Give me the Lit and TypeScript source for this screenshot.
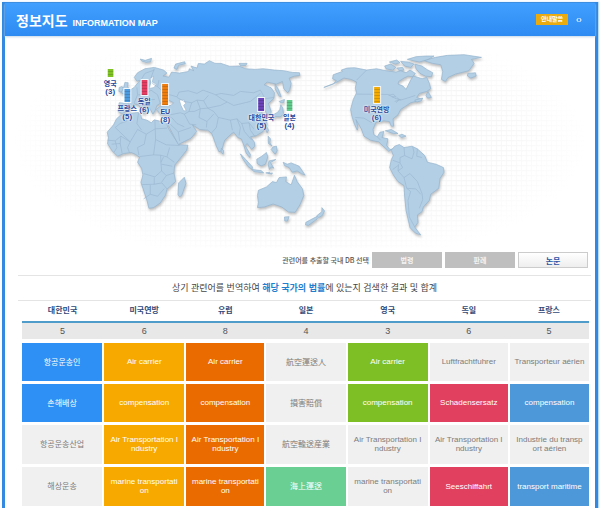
import { LitElement, html, svg, css } from "lit";
import { customElement } from "lit/decorators.js";
import { classMap } from "lit/directives/class-map.js";

interface Marker { name: string; count: number; x: number; y: number; bar: number; color: string }

// Marker centres are given on the 589 x 212 map canvas.
const MAP_W = 589;
const MAP_H = 212;
const markers: Marker[] = [
  { name: "영국", count: 3, x: 105, y: 33, bar: 8, color: "#80c225" },
  { name: "프랑스", count: 5, x: 122, y: 53, bar: 13, color: "#4a9be0" },
  { name: "독일", count: 6, x: 139, y: 44, bar: 15, color: "#e43f63" },
  { name: "EU", count: 8, x: 160, y: 48, bar: 21, color: "#f07d0c" },
  { name: "대한민국", count: 5, x: 256, y: 62, bar: 13, color: "#6a41b8" },
  { name: "일본", count: 4, x: 284, y: 64, bar: 11, color: "#5fcb8b" },
  { name: "미국연방", count: 6, x: 371, y: 51, bar: 16, color: "#f5ab00" },
];

const africa = "M300 226L318 220L355 217L362 226L364 236L380 240L393 248L402 239L438 248L444 264L460 290L477 314L503 315L499 330L480 354L463 375L461 398L466 424L450 438L440 447L436 464L420 488L400 502L386 504L380 480L368 444L362 426L368 404L364 384L352 366L358 351L345 342L333 337L310 340L292 348L276 332L262 310L265 292L261 276L280 254L289 236Z";
const eurasia = "M294 215L297 188L325 190L329 174L314 158L328 151L342 142L352 129L362 120L350 123L342 112L352 98L374 86L402 82L430 90L440 99L428 108L446 111L454 96L478 99L505 94L507 86L520 92L512 78L530 84L534 70L552 72L567 62L584 70L602 70L628 79L655 78L676 86L704 88L728 86L762 90L790 92L815 97L837 98L838 106L822 108L806 114L812 130L808 148L802 158L790 146L786 124L768 132L740 126L731 134L752 143L762 158L760 175L744 190L752 214L750 224L740 223L730 204L724 218L734 232L740 252L728 274L708 286L690 290L702 306L703 318L694 328L680 310L674 316L690 343L688 352L677 338L670 315L663 296L652 292L640 276L632 282L613 300L604 330L596 335L588 318L578 290L574 280L562 270L538 268L526 260L516 254L529 274L512 294L474 313L460 286L442 252L450 231L444 225L422 224L408 208L420 198L452 196L460 188L442 178L426 186L410 196L405 210L398 222L388 204L370 190L380 214L370 221L355 194L342 191L325 212L306 220Z";
const oldWorldIslands = [
  "M303 158L301 146L311 141L314 127L324 128L322 140L331 152L326 158L308 161Z",
  "M296 154L297 142L306 139L309 146L303 156Z",
  "M360 57L375 61L394 55L391 65L378 67L364 63Z",
  "M461 84L466 72L493 65L495 71L475 76L470 88Z",
  "M473 463L475 428L492 411L497 429L485 464L478 470Z",
  "M603 324L610 332L608 342L602 336Z",
  "M656 70L680 70L676 76L660 77Z",
  "M764 132L774 148L782 170L776 168L764 146Z",
  "M776 184L792 178L790 187L780 188Z",
  "M781 194L787 204L789 222L779 230L764 229L758 236L755 226L772 216L778 208Z",
  "M741 262L744 270L740 278L736 268Z",
  "M743 288L750 296L748 308L755 318L744 310Z",
  "M758 320L768 318L770 332L764 342L752 328Z",
  "M660 341L676 358L696 380L695 388L682 378L666 354Z",
  "M695 388L722 391L730 398L700 394Z",
  "M709 357L724 348L738 337L742 350L735 372L722 377L710 370Z",
  "M746 362L766 358L750 367L760 384L752 380L747 388L743 372Z",
  "M736 398L748 396L745 400L756 398L754 402Z",
  "M788 366L800 372L812 368L836 378L854 405L842 400L830 392L815 396L806 382L792 376Z",
  "M711 466L714 450L738 440L756 424L768 427L776 412L798 410L796 424L812 434L822 405L830 424L846 446L850 466L838 494L824 516L804 515L784 500L758 491L732 500L711 502L714 486Z",
  "M792 530L806 529L801 542L793 542Z",
  "M856 546L890 528L890 536L864 555L855 554Z",
  "M889 526L904 514L904 502L912 512L905 526L894 532Z",
];
const oldBorders = "M262 300L285 302L302 288L330 305L352 268L378 282L405 266L440 264M322 222L318 244L300 250L285 262L330 305M355 218L350 250L364 270M404 240L406 298L438 314L478 316M378 282L372 312L352 322L356 345M330 305L322 322L328 338M302 288L300 310L274 312M285 302L290 322L282 336M300 310L306 340M358 349L400 344L421 345L440 350L448 322M421 345L422 366L424 392L404 410L370 400M424 372L456 378M424 392L438 406L462 398M402 412L402 432L366 433M402 432L425 428L440 446M390 434L390 462L370 476M390 462L412 468L432 445M438 406L424 426M406 298L400 344M440 350L462 366M422 366L430 350";
const asiaBorders = "M342 188L352 164L350 142M354 164L376 164L392 150L412 164L420 190M362 120L374 100L402 90M388 144L392 114L402 86M376 180L404 178M412 140L396 130M416 120L412 140L434 160L470 170L476 156L504 152L530 160L548 150L586 164L602 160L640 166L660 154L700 158L720 150L734 176L760 172M586 164L606 178L640 196L690 184L720 160M470 172L492 184L514 188L530 180L550 182L564 166M514 188L506 214L492 222L508 252L528 254M450 224L480 218L492 222M530 180L540 206L522 214L506 214M550 182L562 204L540 206M562 204L580 214L594 232L630 240L650 236L664 250L686 248L700 266M540 206L536 232L560 244L558 262M560 244L580 222M594 232L588 262L574 278M630 240L636 270M650 236L660 262L656 286M664 250L672 274L694 300M686 248L690 270L704 290M454 232L470 250L492 260M448 250L474 275L512 262M474 275L478 302M562 204L600 196L620 186";

const northAmerica = "M10 142L38 131L48 122L36 116L38 104L52 99L66 94L62 90L80 84L102 83L138 90L168 86L196 92L226 96L240 92L256 98L268 90L284 100L276 110L262 108L250 114L234 124L232 132L247 138L256 148L262 136L270 120L278 108L292 112L304 116L318 112L326 130L330 146L318 154L296 160L288 172L304 178L286 184L270 188L252 200L240 208L232 224L217 236L219 258L212 258L206 244L190 242L166 246L157 268L160 284L170 290L178 276L190 274L184 292L202 296L198 316L208 328L218 326L204 333L190 320L174 305L150 300L130 288L122 266L106 238L112 262L110 270L100 248L94 228L90 208L98 178L108 158L104 144L108 126L92 118L70 114L56 122L38 132Z";
const southAmerica = "M212 330L222 318L236 313L250 322L274 318L290 326L312 346L320 366L346 372L368 382L370 396L358 414L354 444L330 462L326 480L308 500L304 514L290 524L292 546L282 560L300 584L284 578L268 562L262 536L256 510L252 470L250 436L232 424L218 404L207 382L212 358L218 346Z";
const newWorldIslands = [
  "M310 62L344 52L380 46L430 44L482 52L452 58L460 70L444 92L404 102L382 112L374 124L362 118L366 94L360 74L336 70Z",
  "M441 100L464 98L466 108L450 114L440 108Z",
  "M192 78L210 72L226 82L216 90L196 86Z",
  "M206 66L228 60L238 68L224 72Z",
  "M240 64L262 66L280 72L270 82L252 78Z",
  "M260 58L286 50L316 48L340 48L322 58L296 66Z",
  "M282 72L304 78L318 88L336 98L332 110L314 108L298 100L286 86Z",
  "M228 84L246 82L250 90L236 92Z",
  "M316 166L322 154L332 172L320 174Z",
  "M194 272L212 268L232 280L218 280Z",
  "M234 286L244 282L256 288L242 292Z",
  "M282 180L306 174L302 182L288 186Z",
];
const newBorders = "M138 90L108 120M108 162L202 163L222 174L240 180L260 174L284 166M104 232L130 234L154 248M170 290L180 300M216 360L238 368L246 382L232 392L250 412L268 400L290 424L304 460L306 478L296 504M250 322L252 346L238 352L238 368M252 346L274 356L280 336L276 320M290 326L288 348L304 352M232 392L234 372M250 412L258 444L270 454L262 480L266 530L282 560M258 444L286 446L300 462M216 388L232 376M204 166L218 162L226 170L214 170M228 172L236 178L226 188M222 184L242 178";

@customElement("info-world-map")
class InfoWorldMap extends LitElement {
  static styles = css`
    :host { display: block; position: relative; }
    .canvas { display: block; width: 100%; height: auto; }
    .land { fill: #b3cfe6; stroke: #93b2cb; stroke-width: 2; stroke-linejoin: round; }
    .border { fill: none; stroke: #9ab7d0; stroke-width: 2; stroke-linejoin: round; }
    .sea { fill: #fff; stroke: #9bb8d0; stroke-width: 2; }
    .line { fill: none; stroke: #f6f6f6; stroke-width: 3; }
    .marker {
      position: absolute;
      display: flex;
      flex-direction: column;
      align-items: center;
      transform: translateX(-50%);
      color: #26489b;
      font: bold 7px/9px "Liberation Sans", "Noto Sans CJK KR", sans-serif;
      white-space: nowrap;
      text-shadow: 0 0 2px #fff, 0 0 2px #fff;
    }
    .bar {
      width: 6px;
      margin-bottom: 2px;
      outline: 1px solid rgba(255, 255, 255, 0.8);
      background-image: repeating-linear-gradient(transparent 0 2px, rgba(0, 0, 0, 0.14) 2px 3px);
    }
    .count { font-size: 8px; line-height: 8px; }
  `;

  render() {
    return html`
      <svg class="canvas" viewBox="15 108 1767 636" role="img" aria-label="World map">
        <defs>
          <pattern id="grid" width="15" height="15" patternUnits="userSpaceOnUse">
            <path class="line" d="M0 1.5H15M1.5 0V15" />
          </pattern>
          <radialGradient id="fade">
            <stop offset="0.7" stop-color="#fff" />
            <stop offset="1" stop-color="#000" />
          </radialGradient>
          <mask id="vignette"><rect x="40" y="60" width="1720" height="740" fill="url(#fade)" /></mask>
          <filter id="shade" x="-5%" y="-5%" width="110%" height="115%">
            <feDropShadow dx="2" dy="6" stdDeviation="3" flood-color="#777" flood-opacity="0.45" />
          </filter>
        </defs>
        <rect x="15" y="108" width="1767" height="636" fill="url(#grid)" mask="url(#vignette)" />
        <g transform="translate(60 120)">
          <g filter="url(#shade)">
            <path class="land" d=${africa} />
            <path class="land" d=${eurasia} />
            ${oldWorldIslands.map((d) => svg`<path class="land" d=${d} />`)}
          </g>
          <path class="sea" d="M477 180L490 178L496 190L490 196L498 212L490 212L482 196Z" />
          <path class="sea" d="M384 146L392 128L388 116L400 108L396 126L408 132L402 142Z" />
          <path class="border" d=${oldBorders} />
          <path class="border" d=${asiaBorders} />
        </g>
        <g transform="translate(960 120)">
          <g filter="url(#shade)">
            <path class="land" d=${northAmerica} />
            <path class="land" d=${southAmerica} />
            ${newWorldIslands.map((d) => svg`<path class="land" d=${d} />`)}
          </g>
          <path class="border" d=${newBorders} />
        </g>
      </svg>
      ${markers.map((m) => html`
        <div class="marker" style="left:${(m.x / MAP_W) * 100}%;top:${(m.y / MAP_H) * 100}%">
          <span class="bar" style="height:${m.bar}px;background-color:${m.color}"></span>
          <span>${m.name}</span>
          <span class="count">(${m.count})</span>
        </div>`)}
    `;
  }
}

const countries = [
  { name: "대한민국", total: 5, tone: "blue" },
  { name: "미국연방", total: 6, tone: "amber" },
  { name: "유럽", total: 8, tone: "orange" },
  { name: "일본", total: 4, tone: "mint" },
  { name: "영국", total: 3, tone: "green" },
  { name: "독일", total: 6, tone: "red" },
  { name: "프랑스", total: 5, tone: "sky" },
];

// Long terms carry a zero-width space where they may wrap.
const industry = "Air Transportation I\u200bndustry";
const marine = "marine transportati\u200bon";

// Each term is followed by whether the country's law contains it.
const rows: [string, boolean][][] = [
  [["항공운송인", true], ["Air carrier", true], ["Air carrier", true], ["航空運送人", false], ["Air carrier", true], ["Luftfrachtfuhrer", false], ["Transporteur aérien", false]],
  [["손해배상", true], ["compensation", true], ["compensation", true], ["損害賠償", false], ["compensation", true], ["Schadensersatz", true], ["compensation", true]],
  [["항공운송산업", false], [industry, true], [industry, true], ["航空輸送産業", false], [industry, false], [industry, false], ["Industrie du transp\u200bort aérien", false]],
  [["해상운송", false], [marine, true], [marine, true], ["海上運送", true], [marine, false], ["Seeschiffahrt", true], ["transport maritime", true]],
];

@customElement("app-root")
class AppRoot extends LitElement {
  static styles = css`
    :host {
      display: block;
      box-sizing: border-box;
      padding: 2px 2px 0;
      background: #fafcff;
      font-family: "Liberation Sans", "Noto Sans CJK KR", sans-serif;
      color: #555;
    }
    .frame {
      border: solid #3388e0;
      border-width: 1px 3px 0;
      background: #fff;
      box-shadow: 1px 0 1px #b9dcfb;
    }
    header {
      display: flex;
      align-items: center;
      height: 33px;
      padding: 0 13px 0 11px;
      background: linear-gradient(#419fff, #2d8bf2);
      box-shadow: 0 1px 2px #c5d6e6;
      color: #fff;
    }
    h1 {
      display: flex;
      align-items: baseline;
      gap: 5px;
      margin: 0 auto 0 0;
      font: bold 14px/20px "Noto Sans CJK KR", sans-serif;
    }
    .english { font: bold 9px/12px "Liberation Sans", sans-serif; }
    button { margin: 0; padding: 0; border: 0; font-family: inherit; font-weight: bold; }
    .notice {
      width: 32px;
      height: 11px;
      margin-right: 8px;
      background: #e9ab10;
      color: #fff;
      font-size: 6px;
      line-height: 11px;
    }
    .toggle { display: flex; background: none; }
    .controls {
      display: flex;
      align-items: center;
      justify-content: flex-end;
      gap: 3px;
      height: 24px;
      padding: 0 3px 3px 0;
      margin: 0 4px 0 13px;
      border-bottom: 1px solid #e4e4e4;
      font: 500 7px/12px "Noto Sans CJK KR", sans-serif;
    }
    .db {
      width: 70px;
      height: 16px;
      background: #bfbfbf;
      color: #f4f4f4;
      font-size: 7px;
    }
    .db.active {
      border: 1px solid #ccc;
      background: linear-gradient(#fff, #eee);
      color: #2a55a5;
      font-size: 8px;
    }
    .summary {
      margin: 0 4px 0 13px;
      border-bottom: 1px solid #e4e4e4;
      color: #444;
      font-size: 9px;
      line-height: 24px;
      text-align: center;
    }
    .summary strong { color: #1f80cf; }
    .results { padding: 0 6px 2px 17px; }
    table { width: 100%; table-layout: fixed; border-spacing: 0; }
    .narrow { width: 80px; }
    .medium { width: 81px; }
    .wide { width: 82px; }
    th {
      height: 20px;
      padding: 0;
      border-bottom: 2px solid #4f9bca;
      color: #2f4a78;
      font-size: 8px;
      line-height: 12px;
    }
    td { padding: 0; text-align: center; }
    .total {
      height: 16px;
      border-bottom: 4px solid #fff;
      background: #e8e8e8;
      font-size: 9px;
      line-height: 12px;
    }
    .term {
      height: 38px;
      border: solid #fff;
      border-width: 0 1px 3px;
      background: #f0f0f0;
      color: #7c7c7c;
      font-size: 8px;
      line-height: 9px;
    }
    .term:first-child { border-left: 0; }
    .term:last-child { border-right: 0; }
    .term span { display: block; padding: 10px 4px 11px; }
    .term .cjk { font: 8px/12px "Noto Sans CJK KR", sans-serif; }
    .term.hit { color: #fff; }
    .blue { background: #2e90f5; }
    .amber { background: #f7a900; }
    .orange { background: #ea6c00; }
    .mint { background: #69cf92; }
    .green { background: #7fbf26; }
    .red { background: #e2405f; }
    .sky { background: #4d98d9; }
  `;

  render() {
    return html`
      <div class="frame">
        <header>
          <h1>정보지도 <span class="english">INFORMATION MAP</span></h1>
          <button class="notice">안내말씀</button>
          <button class="toggle" aria-label="Toggle">
            <svg width="6" height="6" viewBox="0 0 6 6" fill="none" stroke="#fff"><path d="M2.4 1L.8 3L2.4 5M3.6 1L5.2 3L3.6 5" /></svg>
          </button>
        </header>
        <info-world-map></info-world-map>
        <div class="controls">
          <span>관련어를 추출할 국내 DB 선택</span>
          <button class="db">법령</button>
          <button class="db">판례</button>
          <button class="db active">논문</button>
        </div>
        <div class="summary">상기 관련어를 번역하여 <strong>해당 국가의 법률</strong>에 있는지 검색한 결과 및 합계</div>
        <div class="results">
          <table>
            <colgroup>
              <col class="medium" /><col class="wide" /><col class="narrow" /><col class="medium" />
              <col class="wide" /><col class="narrow" /><col class="narrow" />
            </colgroup>
            <thead>
              <tr>${countries.map((c) => html`<th scope="col">${c.name}</th>`)}</tr>
            </thead>
            <tbody>
              <tr>${countries.map((c) => html`<td class="total">${c.total}</td>`)}</tr>
              ${rows.map((row) => html`<tr>${row.map(([text, hit], i) => html`
                <td class=${classMap({ term: true, hit, [countries[i].tone]: hit })}>
                  <span class=${classMap({ cjk: /[\u3000-\ud7af]/.test(text) })}>${text}</span>
                </td>`)}</tr>`)}
            </tbody>
          </table>
        </div>
      </div>
    `;
  }
}
